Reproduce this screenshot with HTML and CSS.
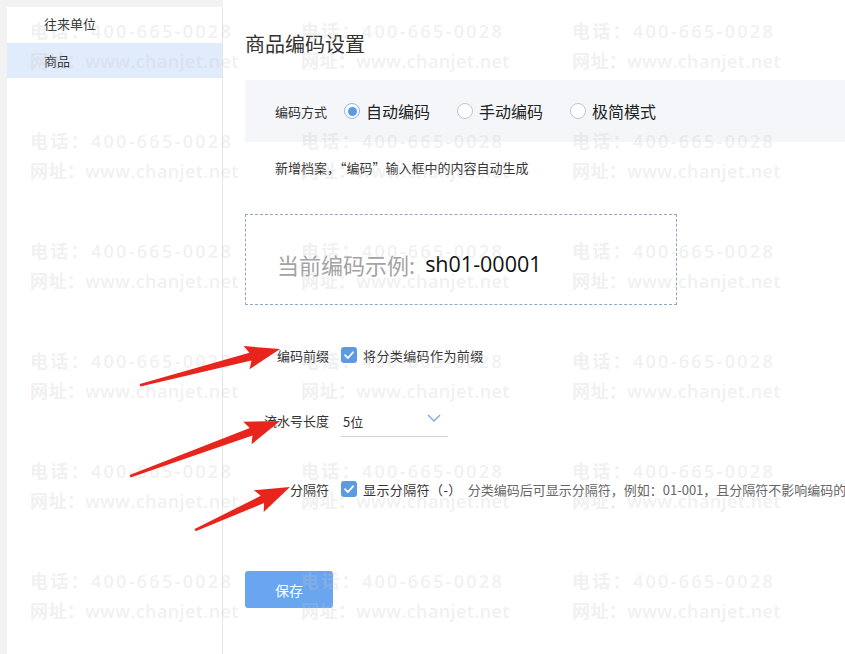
FILE: index.html
```html
<!DOCTYPE html>
<html lang="zh-CN">
<head>
<meta charset="utf-8">
<title>商品编码设置</title>
<link rel="stylesheet" href="styles.css">
</head>
<body>
<div class="app">
  <aside class="sidebar">
    <div class="nav-item">往来单位</div>
    <div class="nav-item active">商品</div>
  </aside>
  <main class="main">
    <h1 class="title">商品编码设置</h1>
    <div class="mode-box">
      <span class="mode-label">编码方式</span>
      <label class="radio checked"><span class="radio-dot"></span>自动编码</label>
      <label class="radio"><span class="radio-dot"></span>手动编码</label>
      <label class="radio"><span class="radio-dot"></span>极简模式</label>
    </div>
    <p class="desc">新增档案，“编码”输入框中的内容自动生成</p>
    <div class="sample">
      <span class="sample-label">当前编码示例:</span>
      <span class="sample-value">sh01-00001</span>
    </div>
    <div class="row row-prefix">
      <span class="row-label">编码前缀</span>
      <span class="checkbox"><svg viewBox="0 0 16 16" width="16" height="16"><path d="M4 8.2 L7 11 L12 5.3" fill="none" stroke="#fff" stroke-width="1.8" stroke-linecap="round" stroke-linejoin="round"/></svg></span>
      <span class="row-text">将分类编码作为前缀</span>
    </div>
    <div class="row row-length">
      <span class="row-label">流水号长度</span>
      <div class="select">
        <span class="select-value">5位</span>
        <svg class="chevron" viewBox="0 0 14 8" width="14" height="8"><path d="M1 1 L7 7 L13 1" fill="none" stroke="#7ba7d9" stroke-width="1.3"/></svg>
      </div>
    </div>
    <div class="row row-sep">
      <span class="row-label">分隔符</span>
      <span class="checkbox"><svg viewBox="0 0 16 16" width="16" height="16"><path d="M4 8.2 L7 11 L12 5.3" fill="none" stroke="#fff" stroke-width="1.8" stroke-linecap="round" stroke-linejoin="round"/></svg></span>
      <span class="row-text">显示分隔符（-）</span>
      <span class="row-hint">分类编码后可显示分隔符，例如：01-001，且分隔符不影响编码的唯一性</span>
    </div>
    <button class="save">保存</button>
  </main>
</div>

<div class="watermark">
  <div class="wm"><span class="wm-tel">电话：400-665-0028</span><span class="wm-url">网址：www.chanjet.net</span></div>
  <div class="wm"><span class="wm-tel">电话：400-665-0028</span><span class="wm-url">网址：www.chanjet.net</span></div>
  <div class="wm"><span class="wm-tel">电话：400-665-0028</span><span class="wm-url">网址：www.chanjet.net</span></div>
  <div class="wm"><span class="wm-tel">电话：400-665-0028</span><span class="wm-url">网址：www.chanjet.net</span></div>
  <div class="wm"><span class="wm-tel">电话：400-665-0028</span><span class="wm-url">网址：www.chanjet.net</span></div>
  <div class="wm"><span class="wm-tel">电话：400-665-0028</span><span class="wm-url">网址：www.chanjet.net</span></div>
  <div class="wm"><span class="wm-tel">电话：400-665-0028</span><span class="wm-url">网址：www.chanjet.net</span></div>
  <div class="wm"><span class="wm-tel">电话：400-665-0028</span><span class="wm-url">网址：www.chanjet.net</span></div>
  <div class="wm"><span class="wm-tel">电话：400-665-0028</span><span class="wm-url">网址：www.chanjet.net</span></div>
  <div class="wm"><span class="wm-tel">电话：400-665-0028</span><span class="wm-url">网址：www.chanjet.net</span></div>
  <div class="wm"><span class="wm-tel">电话：400-665-0028</span><span class="wm-url">网址：www.chanjet.net</span></div>
  <div class="wm"><span class="wm-tel">电话：400-665-0028</span><span class="wm-url">网址：www.chanjet.net</span></div>
  <div class="wm"><span class="wm-tel">电话：400-665-0028</span><span class="wm-url">网址：www.chanjet.net</span></div>
  <div class="wm"><span class="wm-tel">电话：400-665-0028</span><span class="wm-url">网址：www.chanjet.net</span></div>
  <div class="wm"><span class="wm-tel">电话：400-665-0028</span><span class="wm-url">网址：www.chanjet.net</span></div>
  <div class="wm"><span class="wm-tel">电话：400-665-0028</span><span class="wm-url">网址：www.chanjet.net</span></div>
  <div class="wm"><span class="wm-tel">电话：400-665-0028</span><span class="wm-url">网址：www.chanjet.net</span></div>
  <div class="wm"><span class="wm-tel">电话：400-665-0028</span><span class="wm-url">网址：www.chanjet.net</span></div>
</div>

<svg class="arrows" width="845" height="654" viewBox="0 0 845 654">
  <g fill="#e8251d">
    <polygon transform="translate(140,385) rotate(-14.4)" points="0,-1 114,-4 110,-12 144.6,0 110,12 114,4 0,1.5"/>
    <polygon transform="translate(130,476) rotate(-20.1)" points="0,-1 129,-4 125,-12 159.8,0 125,12 129,4 0,1.5"/>
    <polygon transform="translate(195,530) rotate(-24.4)" points="0,-1 74,-4 70,-12 104.3,0 70,12 74,4 0,1.5"/>
  </g>
</svg>
</body>
</html>
```

FILE: styles.css
```css
* { box-sizing: border-box; }

html, body {
  margin: 0;
  padding: 0;
  width: 845px;
  height: 654px;
  overflow: hidden;
  background: #f2f2f2;
  font-family: "Noto Sans CJK SC", "Noto Sans", sans-serif;
  color: #333;
  position: relative;
}

.app {
  display: flex;
  height: 654px;
}

.sidebar {
  width: 216px;
  flex-shrink: 0;
  margin: 7px 0 0 7px;
  background: #fff;
  border-right: 1px solid #e6e6e6;
}

.nav-item {
  height: 36px;
  line-height: 36px;
  padding-left: 37px;
  font-size: 13px;
  color: #333;
}

.nav-item:first-child {
  line-height: 34px;
}

.nav-item.active {
  background: #e0ebfb;
  height: 35px;
  line-height: 35px;
}

.main {
  flex: 1;
  min-width: 0;
  background: #fff;
  padding: 30px 0 0 22px;
  overflow: hidden;
}

.title {
  margin: 0;
  font-size: 20px;
  line-height: 28px;
  font-weight: normal;
  color: #333;
}

.mode-box {
  margin-top: 22px;
  height: 62px;
  background: #f4f6f9;
  display: flex;
  align-items: center;
  padding-left: 30px;
  white-space: nowrap;
}

.mode-label {
  font-size: 13px;
  color: #333;
  margin-right: 17px;
}

.radio {
  display: flex;
  align-items: center;
  font-size: 16px;
  color: #222;
  margin-right: 27px;
}

.radio-dot {
  width: 16px;
  height: 16px;
  border-radius: 50%;
  border: 1px solid #c2c6cc;
  background: #fff;
  margin-right: 6px;
  display: flex;
  align-items: center;
  justify-content: center;
}

.radio.checked .radio-dot {
  border-color: #8fb8e8;
}

.radio.checked .radio-dot::after {
  content: "";
  width: 9px;
  height: 9px;
  border-radius: 50%;
  background: #5c9ae4;
}

.desc {
  margin: 16px 0 0 30px;
  font-size: 13px;
  line-height: 20px;
  color: #333;
}

.sample {
  margin-top: 36px;
  width: 432px;
  height: 91px;
  border: 1px dashed #8ea9c4;
  display: flex;
  align-items: center;
  padding: 8px 0 0 31px;
}

.sample-label {
  color: #a3a3a3;
  font-size: 22px;
  margin-right: 10px;
}

.sample-value {
  color: #111;
  font-family: "Open Sans", "Noto Sans", sans-serif;
  font-size: 21.5px;
}

.row {
  display: flex;
  align-items: center;
  font-size: 13px;
  white-space: nowrap;
}

.row > * {
  flex-shrink: 0;
}

.row-label {
  width: 84px;
  text-align: right;
  margin-right: 12px;
  color: #333;
}

.row-prefix {
  margin-top: 35px;
  height: 30px;
}

.row-length {
  margin-top: 34px;
  height: 33px;
}

.row-sep {
  margin-top: 37px;
  height: 30px;
}

.checkbox {
  width: 16px;
  height: 16px;
  border-radius: 3px;
  background: #5c9ae4;
  margin-right: 6px;
  display: flex;
}

.row-text {
  color: #333;
  letter-spacing: 0.4px;
}

.row-hint {
  color: #666;
  margin-left: 6px;
}

.select {
  width: 107px;
  height: 33px;
  border-bottom: 1px solid #d4d4d4;
  display: flex;
  align-items: center;
  justify-content: space-between;
  padding: 2px 7px 0 2px;
}

.chevron {
  margin-top: -6px;
}

.save {
  margin-top: 67px;
  width: 88px;
  height: 37px;
  border: none;
  border-radius: 3px;
  background: #6aa5f0;
  color: #fff;
  font-family: "Noto Sans CJK SC", sans-serif;
  font-size: 14px;
  padding: 0;
}

.watermark {
  position: absolute;
  left: 30px;
  top: 16px;
  display: grid;
  grid-template-columns: repeat(3, 271px);
  grid-auto-rows: 110px;
  pointer-events: none;
}

.wm {
  display: flex;
  flex-direction: column;
  font-family: "Open Sans", "Noto Sans CJK SC", sans-serif;
  font-size: 18px;
  font-weight: 600;
  line-height: 30px;
  color: rgba(200, 200, 200, 0.27);
  white-space: nowrap;
}

.wm-tel {
  letter-spacing: 2.3px;
}

.wm-url {
  letter-spacing: 0.4px;
}

.arrows {
  position: absolute;
  left: 0;
  top: 0;
  pointer-events: none;
}
```
